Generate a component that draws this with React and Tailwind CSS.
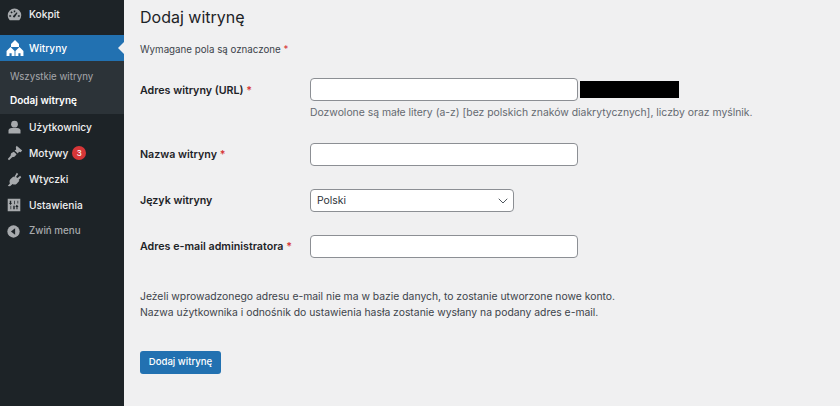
import React from 'react';
import { ChevronDown } from 'lucide-react';

const font = { fontFamily: 'Inter, "Noto Sans", sans-serif' };

const Gauge = () => (
  <svg width="15" height="15" viewBox="0 0 20 20" fill="#a7aaad">
    <path fillRule="evenodd" d="M10 2a9 9 0 0 0-9 9c0 2.600 1 4.800 2.700 6.500h12.600A9 9 0 0 0 19 11a9 9 0 0 0-9-9zM9 4.500h2V7H9zM4.500 7l1.400-1.400 1.700 1.700-1.400 1.400zM3 11h2.500v2H3zm11.500 0H17v2h-2.500zM11 12.500a1.500 1.500 0 1 1-2.300-1.300L13 7l1 1z" />
  </svg>
);

const Homes = () => (
  <svg width="18" height="16" viewBox="0 0 20 18" fill="#fff">
    <path d="M10 0l4.500 4.500V8H5.500V4.500z" />
    <path d="M5 8l4.500 4.500V18H6.200v-3H3.800v3H.5v-5.500z" />
    <path d="M15 8l4.500 4.500V18h-3.300v-3h-2.400v3h-3.300v-5.500z" />
  </svg>
);

const User = () => (
  <svg width="15" height="15" viewBox="0 0 20 20" fill="#a7aaad">
    <circle cx="10" cy="5.500" r="4.500" />
    <path d="M2 18v-4c0-2 2-3.500 4-3.500h8c2 0 4 1.500 4 3.500v4z" />
  </svg>
);

const Brush = () => (
  <svg width="16" height="16" viewBox="0 0 20 20" fill="#a7aaad">
    <path d="M12 1l7 6-2 2-2-.500-1.500 2-4-3.500 2-1.500-.500-2.500z" />
    <path d="M8.500 8.500l3.500 3-2 2.500c-1 1-2.500 1-3.500 1.200L2.500 19 1 17.500l3.500-4.200c.2-1 .2-2.300 1.200-3.200z" />
  </svg>
);

const Plug = () => (
  <svg width="15" height="15" viewBox="0 0 20 20" fill="#a7aaad">
    <path d="M13 1l2 1.500-3 4 2 1.500 3.500-3 1.500 2-3.500 3.500 1 1-3.500 4c-1.500 1.500-4 1.500-5.500.5L4 19l-3-.5 3-3.500c-1-1.500-.8-4 .5-5.500l4-3.500 1 1z" />
  </svg>
);

const Sliders = () => (
  <svg width="14" height="14" viewBox="0 0 20 20" fill="#a7aaad">
    <path fillRule="evenodd" d="M1 1h18v18H1zm3 3v3H2.800L5 10l2.200-3H6V4zm1 7v5h1v-5zm5-7v5h1V4zm5 0v4h1V4zm-1.500 6L12 13h1.500v3h1.500v-3H16.500L14.500 10z" />
    <path d="M9 11h2v5H9z" fill="#1d2327" />
  </svg>
);

const Collapse = () => (
  <svg width="13" height="13" viewBox="0 0 20 20">
    <circle cx="10" cy="10" r="9.500" fill="#a7aaad" />
    <path d="M12.500 5v10L6 10z" fill="#1d2327" />
  </svg>
);

const MenuRow = ({ icon, label, dim, children }) => (
  <div className={`h-[26px] flex items-center font-medium ${dim ? 'text-[9.800px] text-[#a7aaad]' : 'text-[10.200px] text-[#f0f0f1]'}`}>
    <span className="w-[29px] pl-[7px] flex items-center">{icon}</span>
    <span className="pt-px">{label}</span>
    {children}
  </div>
);

const Sidebar = () => (
  <aside className="w-[124px] shrink-0 bg-[#1d2327] pt-px">
    <MenuRow icon={<Gauge />} label="Kokpit" />
    <div className="relative mt-2 h-[26px] bg-[#2271b1] flex items-center text-[10.200px] font-medium text-white">
      <span className="w-[29px] pl-[6px] flex items-center"><Homes /></span>
      <span className="pt-px">Witryny</span>
      <span className="absolute right-0 top-[7px] border-y-[6px] border-r-[6px] border-y-transparent border-r-[#f0f0f1]" />
    </div>
    <div className="h-[53px] bg-[#2c3338] pt-[5px] pl-[10px]">
      <div className="h-[23px] flex items-center text-[9.700px] text-[#c3c4c7] opacity-80">Wszystkie witryny</div>
      <div className="h-[23px] flex items-center text-[10px] text-white font-semibold">Dodaj witrynę</div>
    </div>
    <MenuRow icon={<User />} label="Użytkownicy" />
    <MenuRow icon={<Brush />} label="Motywy">
      <span className="ml-[4px] w-[14px] h-[14px] rounded-full bg-[#d63638] text-white text-[8px] flex items-center justify-center">3</span>
    </MenuRow>
    <MenuRow icon={<Plug />} label="Wtyczki" />
    <MenuRow icon={<Sliders />} label="Ustawienia" />
    <MenuRow icon={<Collapse />} label="Zwiń menu" dim />
  </aside>
);

const Req = () => <span className="text-[#d63638]"> *</span>;

const Label = ({ children, className = '' }) => (
  <div className={`w-[170px] shrink-0 pt-px text-[10.700px] font-semibold text-[#1d2327] ${className}`}>{children}</div>
);

const Input = () => (
  <div className="w-[268px] h-[23px] bg-white border border-[#8c8f94] rounded-[4px]" />
);

export default function App() {
  return (
    <div className="flex w-[840px] h-[406px] overflow-hidden bg-[#f0f0f1]" style={font}>
      <Sidebar />
      <main className="pl-4 flex-1 text-[#3c434a]">
        <h1 className="mt-[6px] h-[23px] leading-[23px] text-[16px] font-normal text-[#1d2327]">Dodaj witrynę</h1>
        <p className="mt-[14px] h-[14px] leading-[14px] text-[9.750px]">Wymagane pola są oznaczone<Req /></p>
        <div className="mt-[21px] flex items-start">
          <Label className="h-[23px] leading-[23px]">Adres witryny (URL)<Req /></Label>
          <div>
            <div className="flex items-center gap-[2px]">
              <Input />
              <div className="w-[99px] h-[17px] bg-black" />
            </div>
            <p className="mt-[4px] h-[16px] leading-[16px] text-[10.400px] text-[#646970] whitespace-nowrap">Dozwolone są małe litery (a-z) [bez polskich znaków diakrytycznych], liczby oraz myślnik.</p>
          </div>
        </div>
        <div className="mt-[22px] flex items-center">
          <Label>Nazwa witryny<Req /></Label>
          <Input />
        </div>
        <div className="mt-[23px] flex items-center">
          <Label>Język witryny</Label>
          <div className="w-[204px] h-[23px] bg-white border border-[#8c8f94] rounded-[4px] pl-[6px] pr-[2px] flex items-center justify-between text-[10.400px] text-[#2c3338]">
            <span>Polski</span>
            <ChevronDown size={16} strokeWidth={1.5} className="text-[#50575e]" />
          </div>
        </div>
        <div className="mt-[23px] flex items-center">
          <Label>Adres e-mail administratora<Req /></Label>
          <Input />
        </div>
        <div className="mt-[31px] text-[10.370px] leading-[16px] whitespace-nowrap">
          <p>Jeżeli wprowadzonego adresu e-mail nie ma w bazie danych, to zostanie utworzone nowe konto.</p>
          <p>Nazwa użytkownika i odnośnik do ustawienia hasła zostanie wysłany na podany adres e-mail.</p>
        </div>
        <button className="mt-[30px] w-[81px] h-[23px] bg-[#2271b1] rounded-[3px] text-white text-[9.600px] font-medium">Dodaj witrynę</button>
      </main>
    </div>
  );
}
